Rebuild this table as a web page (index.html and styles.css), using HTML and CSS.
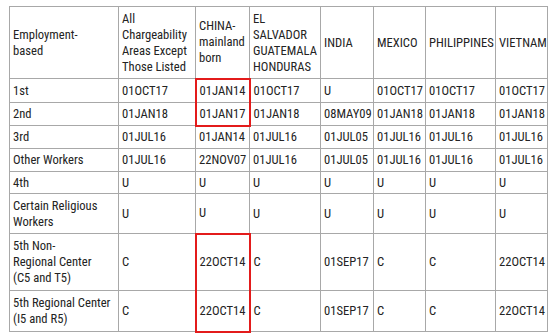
FILE: index.html
```html
<!DOCTYPE html>
<html>
<head>
<meta charset="utf-8">
<link rel="stylesheet" href="styles.css">
</head>
<body>
<table class="grid">
  <colgroup>
    <col class="c-cat"><col class="c-all"><col class="c-china"><col class="c-els"><col class="c-india"><col class="c-mex"><col class="c-phl"><col class="c-vn">
  </colgroup>
  <thead>
    <tr class="h-head">
      <th>Employment-<br>based</th>
      <th>All<br>Chargeability<br>Areas Except<br>Those Listed</th>
      <th>CHINA-<br>mainland<br>born</th>
      <th>EL<br>SALVADOR<br>GUATEMALA<br>HONDURAS</th>
      <th>INDIA</th>
      <th>MEXICO</th>
      <th>PHILIPPINES</th>
      <th>VIETNAM</th>
    </tr>
  </thead>
  <tbody>
    <tr class="h-24"><td>1st</td><td>01OCT17</td><td class="hl hl-top">01JAN14</td><td>01OCT17</td><td>U</td><td>01OCT17</td><td>01OCT17</td><td>01OCT17</td></tr>
    <tr class="h-23"><td>2nd</td><td>01JAN18</td><td class="hl hl-bottom">01JAN17</td><td>01JAN18</td><td>08MAY09</td><td>01JAN18</td><td>01JAN18</td><td>01JAN18</td></tr>
    <tr class="h-23"><td>3rd</td><td>01JUL16</td><td>01JAN14</td><td>01JUL16</td><td>01JUL05</td><td>01JUL16</td><td>01JUL16</td><td>01JUL16</td></tr>
    <tr class="h-23"><td>Other Workers</td><td>01JUL16</td><td>22NOV07</td><td>01JUL16</td><td>01JUL05</td><td>01JUL16</td><td>01JUL16</td><td>01JUL16</td></tr>
    <tr class="h-22"><td>4th</td><td>U</td><td>U</td><td>U</td><td>U</td><td>U</td><td>U</td><td>U</td></tr>
    <tr class="h-40"><td>Certain Religious<br>Workers</td><td>U</td><td>U</td><td>U</td><td>U</td><td>U</td><td>U</td><td>U</td></tr>
    <tr class="h-57"><td>5th Non-<br>Regional Center<br>(C5 and T5)</td><td>C</td><td class="hl hl-top">22OCT14</td><td>C</td><td>01SEP17</td><td>C</td><td>C</td><td>22OCT14</td></tr>
    <tr class="h-41"><td>5th Regional Center<br>(I5 and R5)</td><td>C</td><td class="hl hl-bottom">22OCT14</td><td>C</td><td>01SEP17</td><td>C</td><td>C</td><td>22OCT14</td></tr>
  </tbody>
</table>
</body>
</html>
```
FILE: styles.css
```css
html, body {
  margin: 0;
  background: #ffffff;
}
body {
  padding: 6px 0 0 9px;
  font-family: "Liberation Sans Narrow", "Roboto Condensed", "DejaVu Sans Condensed", sans-serif;
  font-size: 12.6px;
  color: #232323;
}
.grid {
  border-collapse: collapse;
  table-layout: fixed;
  width: 538px;
  border: 1px solid #8a8a8a;
}
.c-cat { width: 109px; }
.c-all { width: 77px; }
.c-china { width: 54px; }
.c-els { width: 71px; }
.c-india { width: 53px; }
.c-mex { width: 52px; }
.c-phl { width: 70px; }
.c-vn { width: 52px; }
.grid th,
.grid td {
  border: 1px solid #a8a8a8;
  padding: 2px 1px 2px 3px;
  line-height: 16px;
  text-align: left;
  vertical-align: middle;
  font-weight: normal;
  white-space: nowrap;
  overflow: hidden;
}
.h-head { height: 72px; }
.h-24 { height: 24px; }
.h-23 { height: 23px; }
.h-22 { height: 22px; }
.h-40 { height: 40px; }
.h-57 { height: 57px; }
.h-41 { height: 41px; }
.grid td.hl {
  border-left: 2px solid #e31b1b;
  border-right: 2px solid #e31b1b;
}
.grid td.hl-top {
  border-top: 2px solid #e31b1b;
}
.grid td.hl-bottom {
  border-bottom: 2px solid #e31b1b;
}
```
